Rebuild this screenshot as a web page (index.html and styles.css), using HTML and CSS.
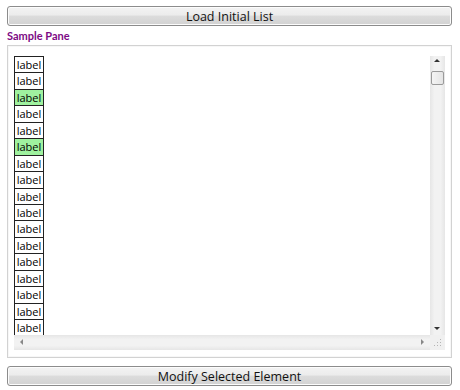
FILE: index.html
```html
<!DOCTYPE html>
<html lang="en">
<head>
    <meta charset="UTF-8">
    <title>Sample Pane</title>
    <link rel="stylesheet" href="styles.css">
</head>
<body>
    <div class="app">
        <button class="btn" id="loadBtn">Load Initial List</button>
        <div class="pane-title">Sample Pane</div>

        <div class="pane">
            <div class="scroller">
                <div class="viewport">
                    <div class="list" id="list"></div>
                </div>
                <div class="vbar">
                    <span class="arrow up"></span>
                    <span class="thumb"></span>
                    <span class="arrow down"></span>
                </div>
                <div class="hbar">
                    <span class="arrow left"></span>
                    <span class="arrow right"></span>
                </div>
                <div class="corner">
                    <svg width="8" height="8" viewBox="0 0 8 8">
                        <rect x="6" y="0" width="1" height="1" fill="#b5b5b5"/>
                        <rect x="3" y="3" width="1" height="1" fill="#b5b5b5"/>
                        <rect x="6" y="3" width="1" height="1" fill="#b5b5b5"/>
                        <rect x="0" y="6" width="1" height="1" fill="#b5b5b5"/>
                        <rect x="3" y="6" width="1" height="1" fill="#b5b5b5"/>
                        <rect x="6" y="6" width="1" height="1" fill="#b5b5b5"/>
                    </svg>
                </div>
            </div>
        </div>

        <button class="btn" id="modifyBtn">Modify Selected Element</button>
    </div>

    <script>
        // selected rows are drawn green
        const selected = [2, 5];
        const list = document.getElementById('list');
        list.innerHTML = Array.from({ length: 24 }, (_, i) =>
            `<div class="label${selected.includes(i) ? ' sel' : ''}">label</div>`
        ).join('');
    </script>
</body>
</html>
```

FILE: styles.css
```css
body { margin: 0; background: #fff; font-family: 'Open Sans', 'Liberation Sans', sans-serif; }
.app { display: flex; flex-direction: column; padding: 6px 8px 4px 7px; height: 390px; box-sizing: border-box; }

.btn { flex-shrink: 0; height: 20px; border: 1px solid #8c8c8c; border-radius: 3px; font-family: inherit; font-size: 12.5px; color: #111; padding: 0;
  background: linear-gradient(#f3f3f3 0%, #ececec 45%, #dcdcdc 50%, #d2d2d2 100%); box-shadow: inset 0 0 0 1px #fcfcfc; }

.pane-title { flex-shrink: 0; color: #7d0a85; font-family: Lato, 'Open Sans', sans-serif; font-weight: 700; font-size: 11px; line-height: 14px; margin: 3px 0 2px 0; }

.pane { flex: 1; min-height: 0; border: 1px solid #d2d2d2; box-shadow: inset 0 0 0 1px #f7f7f7; padding: 10px 6px 7px 6px; margin-bottom: 8px; display: flex; }
.scroller { flex: 1; min-height: 0; display: grid; grid-template-columns: minmax(0, 1fr) 15px; grid-template-rows: minmax(0, 1fr) 15px; }

.viewport { overflow: hidden; background: #fff; }
.list { display: flex; flex-direction: column; align-items: flex-start; }
.label { flex-shrink: 0; width: 28px; height: 15.44px; border: 1px solid #222; border-top: 0; font-size: 11px; line-height: 15px; text-align: center; color: #000; background: #fff; }
.label:first-child { border-top: 1px solid #222; }
.label.sel { background: #9ff29f; }

.vbar { position: relative; background: linear-gradient(90deg, #e6e6e6, #f2f2f2 30%, #f2f2f2 70%, #e6e6e6); }
.hbar { position: relative; background: linear-gradient(#e6e6e6, #f2f2f2 30%, #f2f2f2 70%, #e6e6e6); }
.corner { background: #f0f0f0; display: flex; align-items: flex-end; justify-content: flex-end; padding: 0 3px 3px 0; }

.thumb { position: absolute; left: 1px; top: 15px; width: 11px; height: 12px; border: 1px solid #9a9a9a; border-radius: 2px;
  background: linear-gradient(90deg, #f4f4f4, #e4e4e4); }

.arrow { position: absolute; width: 0; height: 0; border: 3px solid transparent; }
.arrow.up { left: 4px; top: 3px; border-bottom: 3px solid #333; border-top: 0; }
.arrow.down { left: 4px; bottom: 5px; border-top: 3px solid #333; border-bottom: 0; }
.arrow.left { left: 6px; top: 4px; border-right: 3px solid #888; border-left: 0; }
.arrow.right { right: 6px; top: 4px; border-left: 3px solid #888; border-right: 0; }
```
